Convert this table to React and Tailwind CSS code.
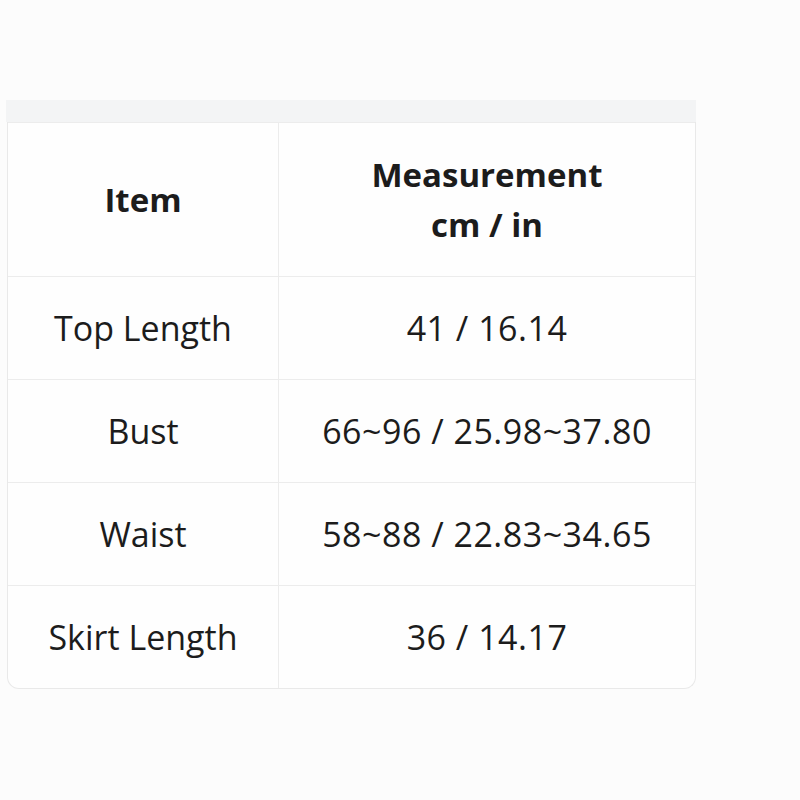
import React from 'react';

const rows = [
    { item: 'Top Length', value: '41 / 16.14' },
    { item: 'Bust', value: '66~96 / 25.98~37.80' },
    { item: 'Waist', value: '58~88 / 22.83~34.65' },
    { item: 'Skirt Length', value: '36 / 14.17' },
];

export default function App() {
    return (
        <div
            className="min-h-[800px] w-[800px] bg-[#fcfcfc] pt-[100px] text-[#1c1c1c]"
            style={{ fontFamily: '"Open Sans", "Noto Sans", sans-serif' }}
        >
            <div className="ml-[6px] w-[690px]">
                {/* Top band */}
                <div className="h-[22px] bg-[#f3f4f5]" />

                {/* Table */}
                <div className="ml-[1px] w-[689px] overflow-hidden rounded-b-[12px] border border-t-0 border-[#e9e9e9] bg-[#fefefe]">
                    <div className="grid grid-cols-[271px_1fr] border-t border-[#ececec]">
                        <div className="flex h-[153px] items-center justify-center border-r border-[#ececec] text-[33px] font-bold">
                            Item
                        </div>
                        <div className="flex h-[153px] flex-col items-center justify-center text-[33px] font-bold leading-[50px]">
                            <span>Measurement</span>
                            <span>cm / in</span>
                        </div>
                    </div>
                    {rows.map((r) => (
                        <div key={r.item} className="grid grid-cols-[271px_1fr] border-t border-[#ececec]">
                            <div className="flex h-[102px] items-center justify-center border-r border-[#ececec] text-[34px]">
                                {r.item}
                            </div>
                            <div className="flex h-[102px] items-center justify-center text-[34px] tracking-[0.5px]">
                                {r.value}
                            </div>
                        </div>
                    ))}
                </div>
            </div>
        </div>
    );
}
